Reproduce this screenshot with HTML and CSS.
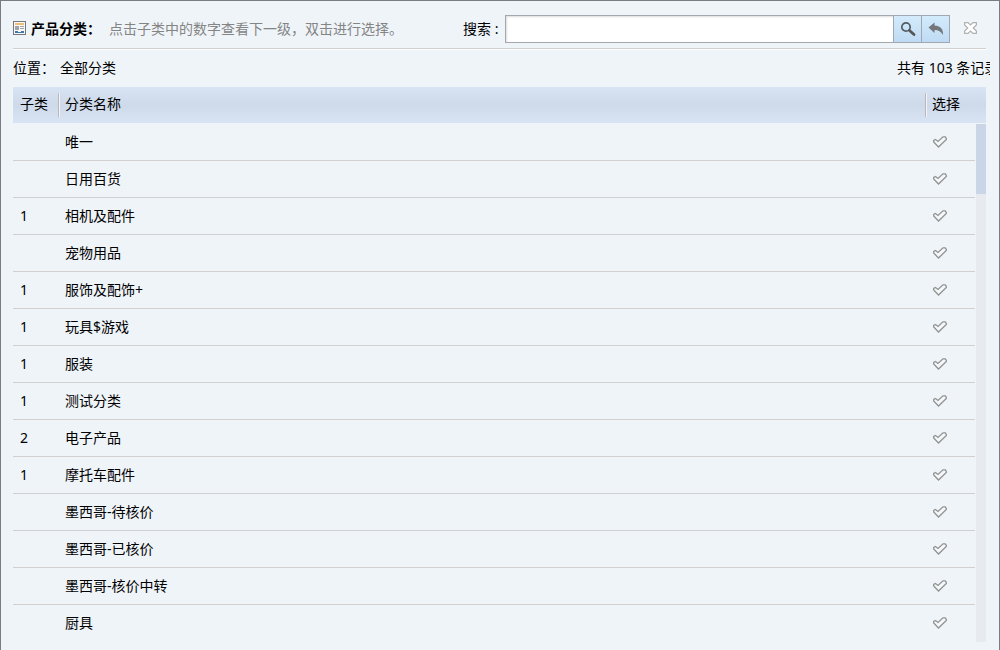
FILE: index.html
```html
<!DOCTYPE html>
<html lang="zh-CN">
<head>
<meta charset="utf-8">
<title>产品分类</title>
<link rel="stylesheet" href="styles.css">
</head>
<body>
<svg class="defs" aria-hidden="true">
  <symbol id="check" viewBox="0 0 14 12">
    <path d="M0.7 6V4.5L2.5 3.5L5 5.5L10 0.8H12.3L13.3 2.5V3.5L5.5 11Z" fill="#f5f8fa" stroke="#929292" stroke-width="1.3"/>
  </symbol>
</svg>
<main class="dialog">
  <header class="titlebar">
    <svg class="form-icon" viewBox="0 0 13 14" shape-rendering="crispEdges" aria-hidden="true">
      <path d="M0 0h13v14H0z" fill="#737780"/><path d="M1 1h11v12H1z" fill="#f8f8f8"/>
      <path d="M2 2h9v2H2z" fill="#efbd79"/>
      <path d="M2 5h4v4H2zM7 5h4v1H7zM7 7h4v1H7z" fill="#a2a3a6"/>
      <path d="M2 10h9v2H2z" fill="#3f78ad"/><path d="M5 10h3v1H5z" fill="#fff"/>
    </svg>
    <h1 class="title">产品分类：</h1>
    <p class="hint">点击子类中的数字查看下一级，双击进行选择。</p>
    <form class="search">
      <label class="search-label" for="keyword">搜索 :</label>
      <input class="search-input" id="keyword" type="text">
      <button class="tool" type="button" aria-label="搜索">
        <svg width="16" height="16" viewBox="0 0 16 16" fill="none" aria-hidden="true">
          <circle cx="6" cy="6" r="4.2" stroke="#555b61" stroke-width="1.7"/>
          <path d="M9.5 9.5L14 13.5" stroke="#555" stroke-width="2.8" stroke-linecap="round"/>
        </svg>
      </button>
      <button class="tool" type="button" aria-label="返回">
        <svg width="16" height="14" viewBox="0 0 16 14" aria-hidden="true">
          <path d="M0.5 5.5L6.5 0.5V3.5C12 3.5 15.5 7 15 13C13 9.5 10.5 8 6.5 8V11Z" fill="#73777b"/>
        </svg>
      </button>
    </form>
    <button class="close" type="button" aria-label="关闭">
      <svg width="13" height="12" viewBox="0 0 13 12" aria-hidden="true">
        <path d="M0.6 0.6H4L6.5 3L9 0.6H12.4V3L9.3 6L12.4 9V11.4H9L6.5 9L4 11.4H0.6V9L3.7 6L0.6 3Z" fill="#fff" stroke="#b0b0b0" stroke-width="1.2"/>
      </svg>
    </button>
  </header>
  <div class="location">
    <span>位置：</span>
    <span class="path">全部分类</span>
    <span class="count">共有 103 条记录</span>
  </div>
  <table class="grid grid-head">
    <thead><tr><th class="col-sub" scope="col">子类</th><th scope="col">分类名称</th><th class="col-pick" scope="col">选择</th></tr></thead>
  </table>
  <div class="list">
    <table class="grid grid-body">
      <tbody>
        <tr><td class="col-sub"></td><td>唯一</td><td class="col-pick"><button class="pick" type="button" aria-label="选择"><svg><use href="#check"/></svg></button></td></tr>
        <tr><td></td><td>日用百货</td><td><button class="pick" type="button" aria-label="选择"><svg><use href="#check"/></svg></button></td></tr>
        <tr><td>1</td><td>相机及配件</td><td><button class="pick" type="button" aria-label="选择"><svg><use href="#check"/></svg></button></td></tr>
        <tr><td></td><td>宠物用品</td><td><button class="pick" type="button" aria-label="选择"><svg><use href="#check"/></svg></button></td></tr>
        <tr><td>1</td><td>服饰及配饰+</td><td><button class="pick" type="button" aria-label="选择"><svg><use href="#check"/></svg></button></td></tr>
        <tr><td>1</td><td>玩具$游戏</td><td><button class="pick" type="button" aria-label="选择"><svg><use href="#check"/></svg></button></td></tr>
        <tr><td>1</td><td>服装</td><td><button class="pick" type="button" aria-label="选择"><svg><use href="#check"/></svg></button></td></tr>
        <tr><td>1</td><td>测试分类</td><td><button class="pick" type="button" aria-label="选择"><svg><use href="#check"/></svg></button></td></tr>
        <tr><td>2</td><td>电子产品</td><td><button class="pick" type="button" aria-label="选择"><svg><use href="#check"/></svg></button></td></tr>
        <tr><td>1</td><td>摩托车配件</td><td><button class="pick" type="button" aria-label="选择"><svg><use href="#check"/></svg></button></td></tr>
        <tr><td></td><td>墨西哥-待核价</td><td><button class="pick" type="button" aria-label="选择"><svg><use href="#check"/></svg></button></td></tr>
        <tr><td></td><td>墨西哥-已核价</td><td><button class="pick" type="button" aria-label="选择"><svg><use href="#check"/></svg></button></td></tr>
        <tr><td></td><td>墨西哥-核价中转</td><td><button class="pick" type="button" aria-label="选择"><svg><use href="#check"/></svg></button></td></tr>
        <tr><td></td><td>厨具</td><td><button class="pick" type="button" aria-label="选择"><svg><use href="#check"/></svg></button></td></tr>
      </tbody>
    </table>
    <div class="track"><div class="thumb"></div></div>
  </div>
</main>
</body>
</html>
```
FILE: styles.css
```css
* { box-sizing: border-box; }
body {
  margin: 0;
  background: #eff4f9;
  color: #000;
  font: 14px/20px "Noto Sans", "Noto Sans CJK SC", sans-serif;
}
button, input { font: inherit; }
.defs { display: none; }
.dialog {
  min-height: 100vh;
  padding: 0 13px 8px 12px;
  border: 1px solid #797c82;
  border-bottom: 0;
}
.titlebar {
  display: flex;
  align-items: center;
  height: 49px;
  padding-top: 8px;
  border-bottom: 1px solid #fff;
  box-shadow: inset 0 -1px #d0d0d0;
}
.form-icon { width: 13px; height: 14px; margin-right: 5px; margin-bottom: 2px; flex: none; }
.title { margin: 0; font-size: 14px; font-weight: 700; white-space: nowrap; }
.hint { margin: 0 0 0 8px; color: #848484; white-space: nowrap; }
.search { display: flex; align-items: center; flex: 1; margin-left: 60px; }
.search-label { margin-right: 7px; white-space: nowrap; }
.search-input {
  flex: 1;
  min-width: 0;
  height: 28px;
  padding: 0 6px;
  border: 1px solid #a3a7b0;
  border-radius: 0;
  background: #fff;
  box-shadow: inset 1px 1px 2px #ddd;
  outline: 0;
}
.tool {
  display: grid;
  place-items: center;
  width: 29px;
  height: 28px;
  margin-left: -1px;
  padding: 0;
  border: 1px solid #a0a8b4;
  background: linear-gradient(#d3ebfb, #bfdaf4);
}
.close, .pick { display: block; padding: 0; border: 0; background: none; }
.close { margin: 0 9px 3px 14px; }
.close svg { display: block; }
.location {
  display: flex;
  height: 37px;
  padding-top: 8px;
  margin-right: -4px;
  overflow: hidden;
  white-space: nowrap;
}
.path { margin-left: 5px; }
.count { width: 93px; margin-left: auto; overflow: hidden; }
.grid { width: 100%; border-collapse: collapse; table-layout: fixed; }
.col-sub { width: 45px; }
.grid th, .grid td { padding: 0 7px 2px; text-align: left; font-weight: 400; white-space: nowrap; }
.grid-head { background: linear-gradient(#d8e3f4, #cedaea 50%, #d8e3f4); }
.grid-head th { height: 36px; }
.grid-head th + th {
  background: linear-gradient(90deg, #b8b8b8 1px, #f2f5f9 1px) no-repeat 0 6px / 2px 24px;
}
.grid-head .col-pick { width: 61px; }
.list { display: flex; padding-top: 1px; }
.grid-body { flex: 1; }
.grid-body .col-pick { width: 50px; }
.grid-body td { height: 37px; box-shadow: inset 0 -1px #d0d0d0; }
.grid-body tr:last-child td { box-shadow: none; }
.pick { margin-left: 1px; }
.pick svg { display: block; width: 14px; height: 12px; }
.track { width: 10px; margin-left: 1px; background: #e7ebf0; }
.thumb { height: 70px; background: #cad6e7; }
```
